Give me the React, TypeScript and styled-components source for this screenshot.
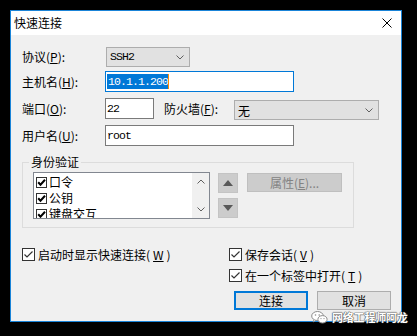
import React from "react";
import styled, { createGlobalStyle } from "styled-components";

const GlobalStyle = createGlobalStyle`
  html, body { margin: 0; padding: 0; background: #000; }
  body { font-family: "Noto Sans CJK SC", sans-serif; font-size: 12px; color: #000; }
  #root { width: 417px; height: 336px; }
`;

const Stage = styled.div`
  position: relative;
  width: 417px;
  height: 336px;
  box-sizing: border-box;
  padding: 10px 0 0 10px;
  background: #000;
  overflow: hidden;
`;

const Window = styled.div`
  width: 392px;
  height: 312px;
  box-sizing: border-box;
  border: 1px solid #1a84d8;
  background: #f0f0f0;
  display: flex;
  flex-direction: column;
`;

const TitleBar = styled.div`
  height: 24px;
  flex: none;
  background: #fff;
  display: flex;
  align-items: center;
  justify-content: space-between;
  padding: 0 9px 0 3px;
  font-size: 12px;
  line-height: 24px;
`;

const Body = styled.div`
  flex: 1;
  padding: 12px 0 0 11px;
  display: flex;
  flex-direction: column;
`;

const Row = styled.div<{ $mt?: number; $h?: number }>`
  display: flex;
  align-items: center;
  height: ${(p) => p.$h ?? 21}px;
  margin-top: ${(p) => p.$mt ?? 0}px;
`;

const Label = styled.label<{ $w: number; $ml?: number }>`
  width: ${(p) => p.$w}px;
  margin-left: ${(p) => p.$ml ?? 0}px;
  flex: none;
  font-size: 12px;
  line-height: 14px;
  white-space: nowrap;
`;

const Mono = styled.span`
  font-family: "Liberation Mono", "DejaVu Sans Mono", monospace;
  font-size: 11.5px;
  letter-spacing: -0.9px;
  line-height: 14px;
`;

const Select = styled.div<{ $w: number; $ml?: number; $mt?: number }>`
  box-sizing: border-box;
  width: ${(p) => p.$w}px;
  height: 20px;
  margin-left: ${(p) => p.$ml ?? 0}px;
  margin-top: ${(p) => p.$mt ?? 0}px;
  background: #e1e1e1;
  border: 1px solid #adadad;
  display: flex;
  align-items: center;
  justify-content: space-between;
  padding: 0 5px 0 3px;
`;

const Field = styled.div<{ $w: number; $focus?: boolean }>`
  box-sizing: border-box;
  width: ${(p) => p.$w}px;
  height: 21px;
  flex: none;
  background: #fff;
  border: 1px solid ${(p) => (p.$focus ? "#0078d7" : "#7a7a7a")};
  display: flex;
  align-items: center;
  padding-left: 1px;
`;

const Selected = styled.span`
  background: #0078d7;
  color: #fff;
  display: inline-flex;
  align-items: center;
  height: 15px;
  padding-left: 1px;
`;

const Caret = styled.span`
  width: 1px;
  height: 15px;
  background: #ff8c00;
`;

const Group = styled.fieldset`
  margin: 9px 0 0 0;
  width: 332px;
  height: 73px;
  box-sizing: border-box;
  border: 1px solid #dcdcdc;
  padding: 3px 0 0 10px;
  min-inline-size: 0;
`;

const Legend = styled.legend`
  padding: 0 2px;
  margin-left: -4px;
  font-size: 12px;
  line-height: 14px;
`;

const GroupInner = styled.div`
  display: flex;
  align-items: flex-start;
`;

const ListBox = styled.div`
  box-sizing: border-box;
  width: 177px;
  height: 47px;
  border: 1px solid #828790;
  background: #fff;
  display: flex;
  overflow: hidden;
`;

const ListItems = styled.div`
  flex: 1;
  padding: 1px 0 0 2px;
  display: flex;
  flex-direction: column;
`;

const ListItem = styled.div`
  height: 16px;
  flex: none;
  display: flex;
  align-items: center;
  gap: 2px;
  font-size: 12px;
  line-height: 14px;
  white-space: nowrap;
`;

const OldBox = styled.span`
  width: 11px;
  height: 11px;
  box-sizing: border-box;
  border: 1px solid #333;
  background: #fff;
  display: flex;
  align-items: center;
  justify-content: center;
  flex: none;
`;

const ScrollBar = styled.div`
  width: 17px;
  flex: none;
  background: #f0f0f0;
  display: flex;
  flex-direction: column;
  justify-content: space-between;
`;

const ScrollArrow = styled.div`
  width: 17px;
  height: 17px;
  display: flex;
  align-items: center;
  justify-content: center;
`;

const ArrowCol = styled.div`
  display: flex;
  flex-direction: column;
  gap: 5px;
  margin: 1px 0 0 8px;
`;

const ArrowBtn = styled.div`
  width: 20px;
  height: 20px;
  box-sizing: border-box;
  background: #cccccc;
  border: 1px solid #c4c4c4;
  display: flex;
  align-items: center;
  justify-content: center;
`;

const PropsBtn = styled.div`
  width: 95px;
  height: 19px;
  box-sizing: border-box;
  margin: 1px 0 0 9px;
  background: #cccccc;
  border: 1px solid #bfbfbf;
  color: #838383;
  display: flex;
  align-items: center;
  justify-content: center;
  font-size: 12px;
  line-height: 14px;
`;

const Bottom = styled.div`
  margin-top: 20px;
  display: grid;
  grid-template-columns: 207px 1fr;
  align-items: start;
`;

const RightCol = styled.div`
  display: flex;
  flex-direction: column;
  gap: 8px;
`;

const CheckItem = styled.label`
  display: flex;
  align-items: center;
  gap: 3px;
  height: 13px;
  font-size: 12px;
  line-height: 14px;
  white-space: nowrap;
`;

const CheckBox = styled.span`
  width: 13px;
  height: 13px;
  box-sizing: border-box;
  border: 1px solid #333;
  background: #fff;
  display: flex;
  align-items: center;
  justify-content: center;
  flex: none;
`;

const ButtonRow = styled.div`
  display: flex;
  gap: 9px;
  margin: 1px 0 0 5px;
`;

const Button = styled.div<{ $primary?: boolean }>`
  width: 74px;
  height: 19px;
  box-sizing: border-box;
  background: #e1e1e1;
  border: ${(p) => (p.$primary ? "2px solid #0078d7" : "1px solid #adadad")};
  display: flex;
  align-items: center;
  justify-content: center;
  font-size: 12px;
  line-height: 14px;
`;

const Watermark = styled.div`
  position: absolute;
  left: 311px;
  top: 311px;
  display: flex;
  align-items: center;
  gap: 4px;
  color: #fff;
  font-size: 11px;
  letter-spacing: -0.2px;
  line-height: 13px;
  text-shadow: 0 0 1px #444, 0 0 1px #444, 0 0 1px #444;
  font-weight: 700;
`;

const Chevron = ({ up }: { up?: boolean }) => (
  <svg width="8" height="5" viewBox="0 0 8 5">
    <polyline
      points={up ? "0.5,4.5 4,1 7.5,4.5" : "0.5,0.5 4,4 7.5,0.5"}
      fill="none"
      stroke="#606060"
      strokeWidth="1"
    />
  </svg>
);

const Tri = ({ up }: { up?: boolean }) => (
  <svg width="10" height="6" viewBox="0 0 10 6">
    <polygon points={up ? "0,6 5,0 10,6" : "0,0 10,0 5,6"} fill="#595959" />
  </svg>
);

const OldCheck = () => (
  <svg width="9" height="9" viewBox="0 0 9 9">
    <polyline points="1.2,4.2 3.5,6.7 8,1.8" fill="none" stroke="#000" strokeWidth="2" />
  </svg>
);

const NewCheck = () => (
  <svg width="11" height="11" viewBox="0 0 11 11">
    <polyline points="1.5,5.5 4,8 9.5,2.5" fill="none" stroke="#333" strokeWidth="1.2" />
  </svg>
);

const CloseIcon = () => (
  <svg width="10" height="10" viewBox="0 0 10 10">
    <line x1="0.5" y1="0.5" x2="9.5" y2="9.5" stroke="#000" strokeWidth="1" />
    <line x1="9.5" y1="0.5" x2="0.5" y2="9.5" stroke="#000" strokeWidth="1" />
  </svg>
);

const WeChatIcon = () => (
  <svg width="17" height="13" viewBox="0 0 17 13">
    <ellipse cx="6.5" cy="5" rx="5.8" ry="4.5" fill="#fff" stroke="#8a8a8a" strokeWidth="1" />
    <path d="M3 8.5 L2 11 L5 9.3" fill="#fff" stroke="#8a8a8a" strokeWidth="0.8" />
    <ellipse cx="11.5" cy="8.3" rx="4.6" ry="3.7" fill="#fff" stroke="#8a8a8a" strokeWidth="1" />
    <circle cx="4.5" cy="4" r="0.8" fill="#8a8a8a" />
    <circle cx="8.2" cy="4" r="0.8" fill="#8a8a8a" />
    <circle cx="10" cy="7.6" r="0.6" fill="#8a8a8a" />
    <circle cx="13" cy="7.6" r="0.6" fill="#8a8a8a" />
  </svg>
);

export default function App() {
  return (
    <>
      <GlobalStyle />
      <Stage>
        <Window>
          <TitleBar>
            <span>快速连接</span>
            <CloseIcon />
          </TitleBar>
          <Body>
            <Row $h={20}>
              <Label $w={83}>
                协议(<u>P</u>):
              </Label>
              <Select $w={84} $ml={1}>
                <Mono>SSH2</Mono>
                <Chevron />
              </Select>
            </Row>
            <Row $mt={4}>
              <Label $w={83}>
                主机名(<u>H</u>):
              </Label>
              <Field $w={189} $focus>
                <Selected>
                  <Mono>10.1.1.200</Mono>
                </Selected>
                <Caret />
              </Field>
            </Row>
            <Row $mt={6}>
              <Label $w={83}>
                端口(<u>O</u>):
              </Label>
              <Field $w={49}>
                <Mono>22</Mono>
              </Field>
              <Label $w={70} $ml={10}>
                防火墙(<u>F</u>):
              </Label>
              <Select $w={145} $mt={3}>
                <span>无</span>
                <Chevron />
              </Select>
            </Row>
            <Row $mt={6}>
              <Label $w={83}>
                用户名(<u>U</u>):
              </Label>
              <Field $w={189}>
                <Mono>root</Mono>
              </Field>
            </Row>
            <Group>
              <Legend>身份验证</Legend>
              <GroupInner>
                <ListBox>
                  <ListItems>
                    <ListItem>
                      <OldBox>
                        <OldCheck />
                      </OldBox>
                      口令
                    </ListItem>
                    <ListItem>
                      <OldBox>
                        <OldCheck />
                      </OldBox>
                      公钥
                    </ListItem>
                    <ListItem>
                      <OldBox>
                        <OldCheck />
                      </OldBox>
                      键盘交互
                    </ListItem>
                  </ListItems>
                  <ScrollBar>
                    <ScrollArrow>
                      <Chevron up />
                    </ScrollArrow>
                    <ScrollArrow>
                      <Chevron />
                    </ScrollArrow>
                  </ScrollBar>
                </ListBox>
                <ArrowCol>
                  <ArrowBtn>
                    <Tri up />
                  </ArrowBtn>
                  <ArrowBtn>
                    <Tri />
                  </ArrowBtn>
                </ArrowCol>
                <PropsBtn>
                  属性(<u>E</u>)...
                </PropsBtn>
              </GroupInner>
            </Group>
            <Bottom>
              <CheckItem>
                <CheckBox>
                  <NewCheck />
                </CheckBox>
                启动时显示快速连接(<u>W</u>)
              </CheckItem>
              <RightCol>
                <CheckItem>
                  <CheckBox>
                    <NewCheck />
                  </CheckBox>
                  保存会话(<u>V</u>)
                </CheckItem>
                <CheckItem>
                  <CheckBox>
                    <NewCheck />
                  </CheckBox>
                  在一个标签中打开(<u>T</u>)
                </CheckItem>
                <ButtonRow>
                  <Button $primary>连接</Button>
                  <Button>取消</Button>
                </ButtonRow>
              </RightCol>
            </Bottom>
          </Body>
        </Window>
        <Watermark>
          <WeChatIcon />
          <span>网络工程师阿龙</span>
        </Watermark>
      </Stage>
    </>
  );
}
